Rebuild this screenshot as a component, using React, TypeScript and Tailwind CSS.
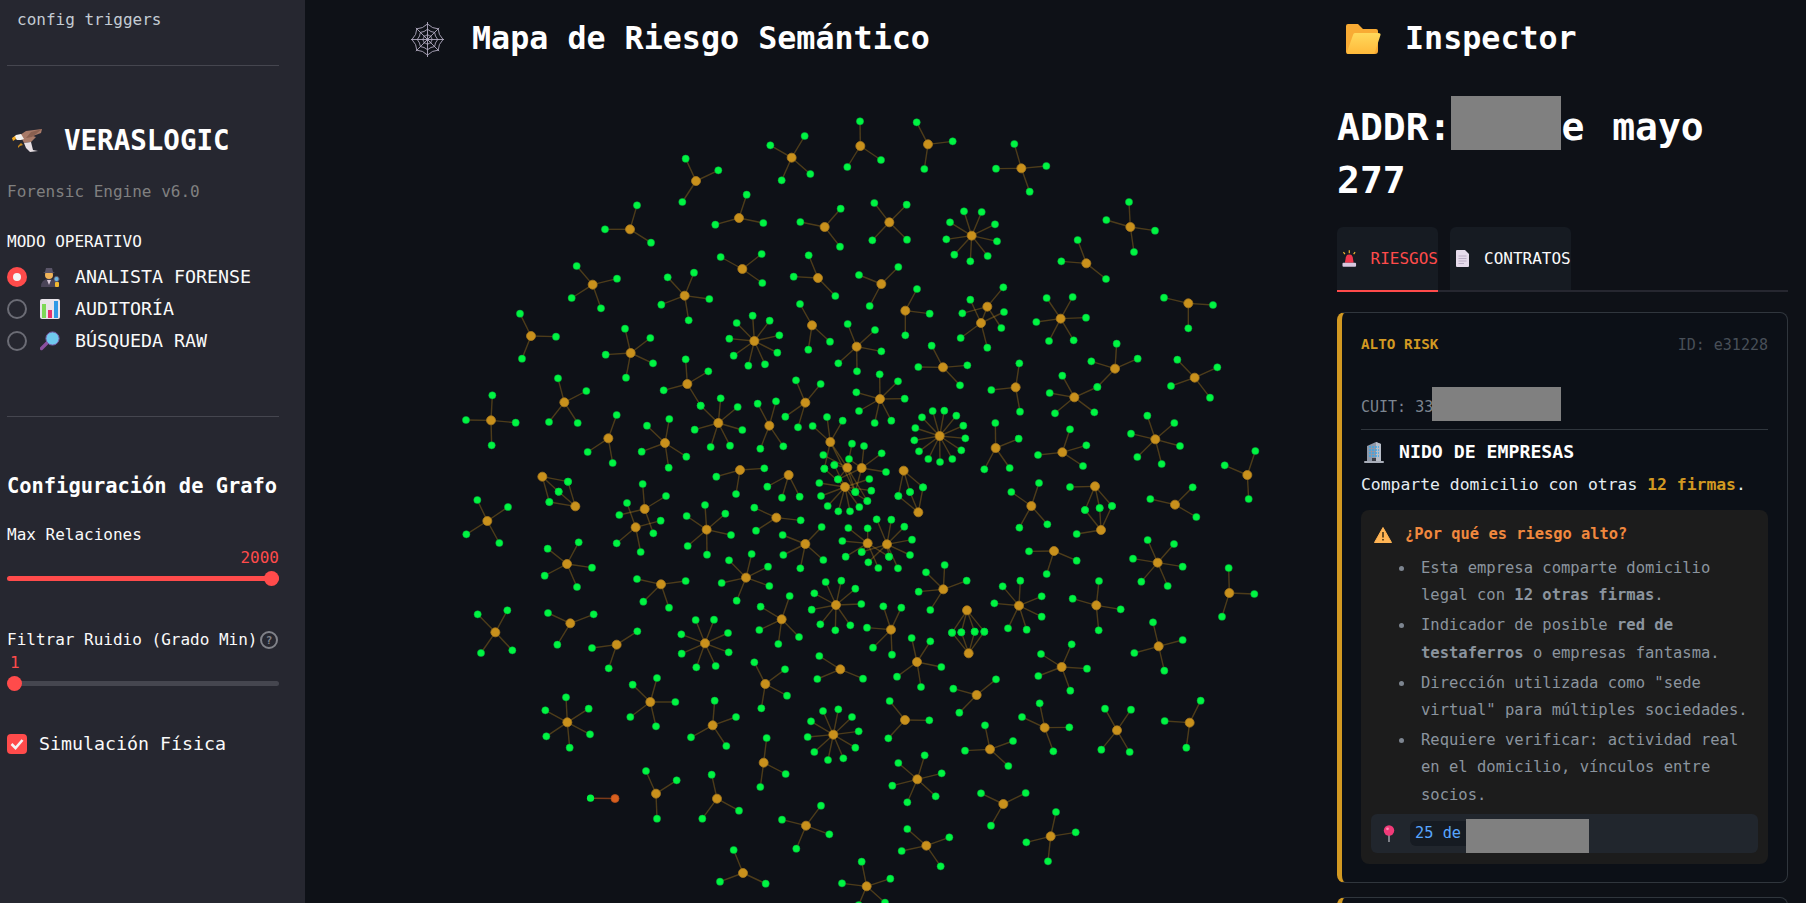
type Hub = number[]

// hub x, hub y, then leaf x/y pairs; numbers are 3x crops, so shift by origin and divide
const c7: Hub[] = [
  [391, 186, 338, 138, 381, 111, 428, 122, 373, 266, 442, 263, 466, 336],
  [442, 263, 370, 225, 456, 191, 403, 255, 414, 298, 502, 363, 466, 336],
  [485, 264, 447, 237, 492, 198, 545, 220, 558, 276, 414, 298, 466, 336],
  [435, 321, 358, 309, 363, 348, 383, 378, 415, 394, 450, 394, 478, 381, 502, 363, 514, 332, 508, 297, 403, 255, 373, 266],
  [611, 272, 595, 348, 630, 336, 669, 322],
  [655, 397, 595, 348, 630, 336, 669, 322],
  [503, 490, 445, 444, 503, 445, 427, 483, 437, 530, 485, 516, 535, 564, 567, 530],
  [561, 493, 530, 418, 574, 419, 613, 440, 636, 479, 630, 525, 594, 565, 505, 547, 567, 530, 485, 516],
]
const c8: Hub[] = [
  [1025, 173, 961, 136, 1064, 108, 1081, 222, 995, 241],
  [1231, 138, 1230, 64, 1192, 201, 1293, 180],
  [738, 243, 707, 176, 805, 211, 697, 306],
  [540, 388, 561, 316, 465, 388, 603, 428],
  [867, 354, 890, 284, 796, 374, 940, 369],
  [1124, 381, 1172, 326, 1051, 366, 1170, 440],
  [428, 554, 380, 498, 501, 536, 365, 594, 453, 625],
  [877, 507, 812, 471, 935, 462, 937, 549],
  [1104, 534, 1076, 466, 1031, 530, 1156, 588],
  [704, 587, 653, 532, 732, 518, 778, 597, 634, 614, 716, 661],
  [243, 708, 210, 641, 318, 710, 216, 776],
  [913, 723, 860, 669, 908, 647, 959, 662, 988, 706, 982, 758, 945, 793, 895, 797, 851, 767, 838, 716],
  [1086, 676, 1050, 612, 1140, 725, 1075, 749],
  [1220, 740, 1193, 672, 1165, 790, 1221, 814, 1275, 690, 1294, 754],
  [542, 759, 525, 686, 601, 714, 609, 790, 528, 833, 467, 764],
  [712, 852, 707, 778, 775, 814, 641, 871, 752, 917],
  [343, 907, 324, 835, 409, 873, 383, 969, 297, 966],
  [123, 961, 127, 886, 197, 968, 125, 1036, 48, 960],
  [805, 969, 812, 895, 863, 921, 877, 990, 840, 1037, 782, 1041, 734, 989, 752, 917],
  [958, 977, 923, 911, 978, 904, 1000, 1039, 931, 1046],
  [1066, 908, 1038, 841, 1112, 852, 1044, 982, 1006, 950],
  [645, 1029, 591, 977, 658, 957, 709, 1070, 656, 1103, 575, 1055],
  [475, 1015, 500, 945, 413, 1056, 488, 1089],
  [870, 1110, 943, 1105, 799, 1130, 858, 1182],
  [1016, 1125, 952, 1160, 996, 1193, 1049, 1190],
  [277, 1130, 354, 1145, 326, 1175, 298, 1206],
  [376, 1219, 354, 1145, 326, 1175, 298, 1206],
]
const c9: Hub[] = [
  [204, 133, 170, 67, 278, 124, 193, 207],
  [484, 205, 463, 132, 559, 198, 509, 275, 408, 206],
  [88, 367, 43, 309, 140, 314, 141, 419, 37, 421],
  [335, 407, 312, 334, 365, 336, 405, 373, 411, 424, 383, 468, 331, 484, 283, 464, 259, 418, 270, 367],
  [811, 381, 807, 306, 885, 392, 822, 456, 739, 360],
  [679, 490, 653, 420, 604, 484, 738, 537],
  [64, 552, 115, 501, -3, 525, 29, 618],
  [136, 632, 171, 567, 209, 641, 136, 706],
  [382, 620, 430, 562, 307, 640, 424, 684, 363, 669],
  [363, 669, 331, 599, 432, 636, 302, 714, 382, 743],
  [602, 656, 560, 594, 638, 591, 678, 653, 641, 721, 567, 723, 529, 666],
  [985, 610, 912, 593, 1059, 615, 985, 685],
  [249, 802, 215, 737, 322, 796, 300, 856, 175, 801],
  [765, 806, 770, 731, 833, 776, 694, 784, 712, 861],
  [467, 862, 478, 790, 394, 870, 480, 935],
  [643, 892, 607, 827, 712, 861, 703, 937, 585, 940, 569, 879],
  [1004, 833, 952, 779, 1072, 802, 1050, 893, 933, 858],
  [886, 1018, 862, 947, 943, 969, 960, 1038, 905, 1092, 832, 1071, 813, 1001],
  [607, 1057, 630, 988, 679, 1036, 669, 1098, 534, 1065],
  [1162, 1125, 1186, 1053, 1094, 1096, 1166, 1197],
  [60, 897, 59, 823, 114, 844, 134, 896, 94, 962, 44, 969, -3, 933, -11, 877],
  [239, 1008, 218, 933, 253, 932, 289, 947, 310, 977, 316, 1015, 304, 1051, 277, 1077, 240, 1086, 205, 1077, 177, 1054, 163, 1021, 166, 984, 186, 952],
  [407, 1044, 406, 969, 476, 1016, 449, 1104, 373, 1108],
]
const c10: Hub[] = [
  [112, 63, 82, 0, 174, 21, 49, 103, 148, 129],
  [584, 27, 578, -48, 648, -12, 508, 45, 610, 100],
  [557, 82, 531, 9, 632, 62, 500, 130, 572, 156],
  [770, 89, 765, 15, 826, 41, 843, 105, 771, 164, 713, 138, 710, 48],
  [979, 53, 913, 23, 1052, 61, 918, 92],
  [1066, 132, 998, 105, 1115, 81, 1120, 180, 1051, 205, 1000, 165],
  [888, 233, 837, 181, 905, 162, 954, 200, 958, 258, 860, 302, 815, 249],
  [1158, 315, 1127, 246, 1174, 242, 1216, 266, 1234, 312, 1201, 376, 1156, 391, 1111, 373, 1085, 329, 1093, 280],
  [995, 358, 932, 320, 1019, 288, 1047, 411, 985, 432, 928, 390],
  [351, 192, 293, 146, 386, 127, 426, 203, 381, 261, 284, 227],
  [633, 253, 561, 237, 707, 243, 657, 323, 580, 305],
  [136, 397, 83, 343, 172, 331, 187, 451, 93, 459],
  [361, 370, 294, 339, 431, 343, 322, 434],
  [500, 434, 562, 394, 426, 444, 476, 505],
  [765, 430, 737, 360, 792, 359, 834, 399, 836, 457, 797, 498, 739, 502, 695, 461, 694, 403],
  [946, 552, 913, 487, 1005, 508, 1011, 587, 934, 625],
  [1171, 508, 1108, 468, 1239, 536, 1102, 537],
  [601, 606, 548, 554, 621, 534, 676, 606, 618, 679, 541, 651],
  [788, 676, 794, 602, 858, 651, 829, 738, 723, 712],
  [352, 667, 348, 592, 416, 626, 420, 703, 359, 743, 289, 709, 286, 631],
  [1150, 704, 1119, 633, 1165, 628, 1206, 651, 1226, 694, 1216, 743, 1180, 775, 1134, 780, 1093, 756, 1073, 711, 1083, 664],
  [941, 788, 950, 714, 1007, 822, 931, 861],
  [618, 881, 588, 813, 680, 841, 621, 956],
  [801, 896, 785, 824, 867, 932, 757, 956],
  [1068, 977, 1113, 917, 1138, 1003, 1039, 1046, 996, 959],
  [879, 1119, 851, 1050, 947, 1151, 810, 1145],
]
const c11: Hub[] = [
  [514, 18, 454, -24, 537, -51, 478, 83, 562, 73],
  [945, 14, 871, -3, 998, -38, 1009, 51],
  [705, -41, 630, -39, 675, 30, 719, 24, 756, 18],
  [723, 90, 675, 30, 719, 24, 756, 18, 650, 102],
  [582, 153, 507, 154, 650, 182, 560, 222],
  [893, 188, 863, 120, 942, 132, 968, 200, 923, 258, 844, 245, 819, 176],
  [1108, 279, 1106, 204, 1183, 282, 1086, 350],
  [709, 316, 717, 243, 782, 328, 716, 391, 638, 296],
  [250, 268, 198, 217, 254, 195, 320, 242, 211, 330, 176, 275],
  [477, 317, 428, 259, 481, 242, 545, 289, 545, 350, 500, 389, 444, 385, 403, 310],
  [93, 389, 70, 319, 124, 323, 96, 464, 39, 443, 21, 383],
  [321, 331, 276, 398, 304, 397, 344, 395, 373, 395],
  [326, 460, 276, 398, 304, 397, 344, 395, 373, 395],
  [171, 486, 155, 414, 211, 424, 244, 501, 183, 561, 111, 530],
  [605, 501, 543, 462, 635, 433, 681, 506, 631, 572, 535, 528],
  [896, 439, 879, 367, 968, 420, 913, 512, 823, 459],
  [350, 585, 280, 566, 408, 538, 298, 638],
  [135, 660, 89, 603, 208, 661, 85, 715],
  [554, 683, 539, 610, 486, 651, 628, 682, 580, 754],
  [771, 691, 735, 626, 813, 629, 809, 756, 724, 749],
  [989, 668, 1022, 602, 914, 663, 979, 743],
  [390, 748, 375, 676, 459, 723, 445, 798, 315, 752],
  [172, 838, 115, 789, 194, 766, 245, 820, 227, 889, 142, 907, 97, 857],
  [430, 912, 363, 880, 497, 879, 393, 977],
  [572, 1009, 588, 936, 647, 997, 564, 1084, 499, 1027],
  [199, 1037, 142, 987, 268, 1012, 242, 1099, 125, 1053],
  [20, 1159, 5, 1085, 91, 1136, 75, 1208, -54, 1150, -4, 1215],
]

const place = (ox: number, oy: number, hubs: Hub[]) =>
  hubs.map((h) => h.map((v, i) => (i % 2 === 0 ? ox + v / 3 : oy + v / 3)))

const hubs = [
  ...place(700, 380, c7),
  ...place(450, 100, c8),
  ...place(860, 100, c9),
  ...place(450, 500, c10),
  ...place(860, 500, c11),
]
const orphan = { x: 615, y: 798.5, lx: 590.5, ly: 798.2 }

const Graph = () => (
  <svg className="block w-[1005px] h-[827px]" viewBox="305 76 1005 827">
    {hubs.map((h, i) => {
      const lines = []
      for (let j = 2; j < h.length; j += 2) {
        lines.push(<line key={j} x1={h[0]} y1={h[1]} x2={h[j]} y2={h[j + 1]} stroke="#d29922" strokeOpacity="0.32" strokeWidth="1.4" />)
      }
      return <g key={i}>{lines}</g>
    })}
    <line x1={orphan.x} y1={orphan.y} x2={orphan.lx} y2={orphan.ly} stroke="#e8641c" strokeOpacity="0.5" strokeWidth="1.4" />
    {hubs.map((h, i) => {
      const leaves = []
      for (let j = 2; j < h.length; j += 2) {
        leaves.push(<circle key={j} cx={h[j]} cy={h[j + 1]} r="3.6" fill="#00f542" stroke="#00b03c" strokeWidth="0.5" />)
      }
      return <g key={i}>{leaves}</g>
    })}
    {hubs.map((h, i) => (
      <circle key={i} cx={h[0]} cy={h[1]} r="4.5" fill="#c9911c" stroke="#a87a1e" strokeWidth="0.8" />
    ))}
    <circle cx={orphan.x} cy={orphan.y} r="4" fill="#d9601f" stroke="#b44f1c" strokeWidth="0.8" />
    <circle cx={orphan.lx} cy={orphan.ly} r="3.6" fill="#00f542" />
  </svg>
)

const WebIcon = () => (
  <svg className="w-[35px] h-[37px]" viewBox="-18 -19 36 38" fill="none" stroke="#b5afc4" strokeWidth="0.9">
    <path d="M0-18V18M-17 0H17M-12-12 12 12M12-12-12 12" />
    <path d="M0-16Q5-11 11-11Q11-5 16 0Q11 5 11 11Q5 11 0 16Q-5 11-11 11Q-11 5-16 0Q-11-5-11-11Q-5-11 0-16Z" />
    <path d="M0-10.5Q3.5-7.5 7.3-7.3Q7.5-3.5 10.5 0Q7.5 3.5 7.3 7.3Q3.5 7.5 0 10.5Q-3.5 7.5-7.3 7.3Q-7.5 3.5-10.5 0Q-7.5-3.5-7.3-7.3Q-3.5-7.5 0-10.5Z" />
    <path d="M0-5Q2-3.5 3.5-3.5Q3.5-2 5 0Q3.5 2 3.5 3.5Q2 3.5 0 5Q-2 3.5-3.5 3.5Q-3.5 2-5 0Q-3.5-2-3.5-3.5Q-2-3.5 0-5Z" />
  </svg>
)

const Eagle = () => (
  <svg className="w-[32px] h-[24px]" viewBox="0 0 32 24">
    <path d="M30 0 14 2 8 6 12 14 19 13 24 8 21 7 29 4Z" fill="#a87a68" />
    <path d="M12 14 19 13 21 21 26 22 18 23 14 19Z" fill="#e8e0e4" />
    <path d="M9 5 4 6 0 10 3 9 5 11 9 11 12 10Z" fill="#f2f0ee" />
    <path d="M0 9 3 7 4 10 1 12Z" fill="#f2a71b" />
    <path d="M9 14 6 17 6 19 8 17 11 16Z" fill="#c98a1d" />
    <path d="M30 0 19 3 14 9 20 8 24 5Z" fill="#8a6050" />
  </svg>
)

const Detective = () => (
  <svg className="w-[20px] h-[21px]" viewBox="0 0 20 21">
    <path d="M1 20Q1 12 9 12Q17 12 17 20Z" fill="#4a4458" />
    <path d="M7 13 9 18 11 13Z" fill="#d8c8d8" />
    <circle cx="9" cy="8" r="4" fill="#f0b45a" />
    <path d="M3 6H15L13 5 12 1H6L5 5Z" fill="#5a5568" />
    <circle cx="16.5" cy="12" r="2.6" fill="#6cb6e0" stroke="#5a5568" />
    <rect x="15" y="15" width="4" height="5" rx="1" fill="#f2b830" />
  </svg>
)

const BarChart = () => (
  <svg className="w-[20px] h-[20px]" viewBox="0 0 20 20">
    <rect width="20" height="20" rx="2" fill="#e8e4ea" />
    <rect x="2" y="5" width="4" height="14" fill="#7ed957" />
    <rect x="8" y="11" width="4" height="8" fill="#e8326e" />
    <rect x="14" y="2" width="4" height="17" fill="#2f9ae6" />
  </svg>
)

const Magnifier = () => (
  <svg className="w-[20px] h-[20px]" viewBox="0 0 20 20">
    <path d="M7 12 1.5 17.5" stroke="#8a4f9e" strokeWidth="3.4" strokeLinecap="round" />
    <circle cx="12.5" cy="7.5" r="6.6" fill="#6fc8ee" stroke="#7a5ca8" strokeWidth="1" />
  </svg>
)

const Folder = () => (
  <svg className="w-[36px] h-[32px]" viewBox="0 0 36 32">
    <defs>
      <linearGradient id="folderFront" x1="0" y1="0" x2="0" y2="1">
        <stop offset="0" stopColor="#ffd95c" />
        <stop offset="1" stopColor="#ffb93a" />
      </linearGradient>
    </defs>
    <path d="M1 3Q1 1 3 1H13L18 6H31Q33 6 33 8V28Q33 31 30 31H3Q1 31 1 29Z" fill="#f8ab34" />
    <path d="M8 12Q8.5 10 10 10H33Q36 10 35.5 12L30 29Q29.5 31 28 31H4Q1.5 31 2 29Z" fill="url(#folderFront)" />
  </svg>
)

const Siren = () => (
  <svg className="w-[15px] h-[17px]" viewBox="0 0 15 17">
    <path d="M7.5 0V3M1.5 2 3 4M13.5 2 12 4" stroke="#f2b830" strokeWidth="1.2" />
    <path d="M3 13 4 7Q4.5 4.5 7.5 4.5Q10.5 4.5 11 7L12 13Z" fill="#f0364c" />
    <rect x="0.5" y="13" width="14" height="4" rx="1" fill="#d8c8e0" />
  </svg>
)

const Doc = () => (
  <svg className="w-[13px] h-[17px]" viewBox="0 0 13 17">
    <path d="M0 1Q0 0 1 0H9L13 4V16Q13 17 12 17H1Q0 17 0 16Z" fill="#e6dcec" />
    <path d="M2.5 6H10.5M2.5 8.5H10.5M2.5 11H10.5M2.5 13.5H8" stroke="#a99cb8" strokeWidth="0.7" />
  </svg>
)

const Building = () => (
  <svg className="w-[20px] h-[21px]" viewBox="0 0 20 21">
    <path d="M3 4 12 0 17 2V20H3Z" fill="#8f98a8" />
    <path d="M12 0 17 2V20H12Z" fill="#b8bec8" />
    <path d="M5 5H15M5 8H15M5 11H15M5 14H15" stroke="#3aa6e8" strokeWidth="1.7" strokeDasharray="2 1" />
    <rect x="8" y="16" width="4" height="4" fill="#3c3f48" />
    <rect x="0" y="19" width="20" height="2" rx="1" fill="#a8adb8" />
  </svg>
)

const Warning = () => (
  <svg className="w-[18px] h-[16px]" viewBox="0 0 18 16">
    <path d="M9 0.5 17.5 15.5H0.5Z" fill="#ffb454" stroke="#ffb454" strokeLinejoin="round" />
    <path d="M9 5V10.5M9 12V13.5" stroke="#3a2a10" strokeWidth="1.5" />
  </svg>
)

const Pin = () => (
  <svg className="w-[12px] h-[17px]" viewBox="0 0 12 17">
    <path d="M6 10V17" stroke="#a8a8b0" strokeWidth="1.4" />
    <circle cx="6" cy="5.5" r="5.2" fill="#f03a78" />
    <circle cx="4.5" cy="3.8" r="1.4" fill="#ff8ab0" />
  </svg>
)

const Redacted = ({ className }: { className: string }) => <span className={`block shrink-0 bg-[#808080] ${className}`} />

const ModeRow = ({ active, icon, label }: { active?: boolean; icon: React.ReactNode; label: string }) => (
  <div className="flex h-[32px] items-center">
    {active ? (
      <span className="flex h-[20px] w-[20px] items-center justify-center rounded-full bg-[#ff4b4b]">
        <span className="h-[8px] w-[8px] rounded-full bg-[#f4f4f4]" />
      </span>
    ) : (
      <span className="h-[20px] w-[20px] rounded-full border-2 border-[#6b6c75]" />
    )}
    <span className="ml-[13px] flex w-[20px] justify-center">{icon}</span>
    <span className="ml-[15px] text-[18.3px] text-[#fafafa]">{label}</span>
  </div>
)

const Sidebar = () => (
  <aside className="w-[305px] shrink-0 bg-[#262730] px-[7px] pt-[8px]">
    <div className="w-[272px]">
      <p className="ml-[10px] text-[16px] leading-[24px] text-[#c4ccd4]">config triggers</p>
      <div className="mt-[33px] h-px bg-[#45464f]" />
      <div className="mt-[55px] flex h-[40px] items-center">
        <span className="ml-[5px]"><Eagle /></span>
        <span className="ml-[20px] text-[27.5px] font-bold text-white">VERASLOGIC</span>
      </div>
      <p className="mt-[19px] text-[16px] leading-[24px] text-[#808080]">Forensic Engine v6.0</p>
      <p className="mt-[26px] text-[16px] leading-[24px] text-[#fafafa]">MODO OPERATIVO</p>
      <div className="mt-[7px]">
        <ModeRow active icon={<Detective />} label="ANALISTA FORENSE" />
        <ModeRow icon={<BarChart />} label="AUDITORÍA" />
        <ModeRow icon={<Magnifier />} label="BÚSQUEDA RAW" />
      </div>
      <div className="mt-[59px] h-px bg-[#45464f]" />
      <h3 className="mt-[55px] text-[20.4px] font-bold leading-[28px] text-white">Configuración de Grafo</h3>
      <p className="mt-[23px] text-[16px] leading-[24px] text-[#fafafa]">Max Relaciones</p>
      <p className="mt-px text-right text-[16px] leading-[20px] text-[#ff4b4b]">2000</p>
      <div className="relative mt-[3px] flex h-[15px] items-center">
        <div className="h-[5px] w-full rounded-full bg-[#ff4b4b]" />
        <span className="absolute right-0 h-[15px] w-[15px] rounded-full bg-[#ff4b4b]" />
      </div>
      <div className="mt-[42px] flex h-[24px] items-center justify-between">
        <span className="text-[16px] text-[#fafafa]">Filtrar Ruidio (Grado Min)</span>
        <span className="mr-px flex h-[18px] w-[18px] items-center justify-center rounded-full border-2 border-[#808289] text-[11px] font-bold leading-none text-[#808289]">?</span>
      </div>
      <p className="mt-px pl-[3px] text-[16px] leading-[20px] text-[#ff4b4b]">1</p>
      <div className="relative mt-[3px] flex h-[15px] items-center">
        <div className="h-[5px] w-full rounded-full bg-[#45464f]" />
        <span className="absolute left-0 h-[15px] w-[15px] rounded-full bg-[#ff4b4b]" />
      </div>
      <div className="mt-[43px] flex h-[20px] items-center">
        <span className="flex h-[20px] w-[20px] items-center justify-center rounded-[4px] bg-[#ff4b4b]">
          <svg className="h-[12px] w-[14px]" viewBox="0 0 14 12" fill="none" stroke="#f4f4f4" strokeWidth="2.6">
            <path d="M1.5 6 5.5 10 12.5 2" />
          </svg>
        </span>
        <span className="ml-[12px] text-[18.3px] text-[#fafafa]">Simulación Física</span>
      </div>
    </div>
  </aside>
)

const Risk = ({ children }: { children: React.ReactNode }) => (
  <li className="mb-[3px] flex">
    <span className="mr-[17px] mt-[11px] h-[5px] w-[5px] shrink-0 rounded-full bg-[#7d8590]" />
    <span>{children}</span>
  </li>
)

const Inspector = () => (
  <section className="w-[496px] shrink-0 pl-[27px] pr-[18px] pt-[15px]">
    <div className="flex h-[48px] items-center">
      <span className="ml-[8px]"><Folder /></span>
      <h2 className="ml-[24px] text-[31.7px] font-bold text-white">Inspector</h2>
    </div>
    <h1 className="mt-[38px] text-[38px] font-bold leading-[53px] text-white [word-spacing:5px]">
      ADDR:<span className="mb-[-10px] mt-[-10px] inline-block h-[54px] w-[110px] bg-[#808080] align-baseline" />e mayo<br />277
    </h1>
    <div className="mt-[20px] flex gap-[12px] border-b-2 border-[#262730]">
      <div className="mb-[-2px] flex h-[65px] w-[101px] items-center rounded-t-[6px] border-b-2 border-[#ff4b4b] bg-[#161b22] pl-[5px]">
        <Siren />
        <span className="ml-[14px] text-[16px] text-[#ff4b4b]">RIESGOS</span>
      </div>
      <div className="flex h-[63px] w-[121px] items-center rounded-t-[6px] bg-[#161b22] pl-[6px]">
        <Doc />
        <span className="ml-[15px] text-[16px] text-[#fafafa]">CONTRATOS</span>
      </div>
    </div>
    <article className="mt-[20px] h-[571px] rounded-[8px] border border-l-[5px] border-[#30363d] border-l-[#d29922] bg-[#0c1017] pl-[19px] pr-[19px] pt-[22px]">
      <div className="flex h-[20px] items-center justify-between">
        <span className="text-[14.3px] font-bold text-[#d29922]">ALTO RISK</span>
        <span className="text-[15px] text-[#484f58]">ID: e31228</span>
      </div>
      <div className="mt-[32px] flex h-[34px] items-center">
        <span className="pt-[6px] text-[15px] text-[#7d8590]">CUIT: 33</span>
        <Redacted className="ml-[-1px] h-[34px] w-[129px]" />
      </div>
      <div className="mt-[8px] h-px bg-[#30363d]" />
      <div className="mt-[10px] flex h-[24px] items-center">
        <span className="ml-[3px]"><Building /></span>
        <strong className="ml-[15px] text-[18.2px] font-bold text-white">NIDO DE EMPRESAS</strong>
      </div>
      <p className="mt-[9px] whitespace-nowrap text-[16.4px] leading-[24px] text-[#e6edf3]">
        Comparte domicilio con otras <b className="text-[#d29922]">12 firmas</b>.
      </p>
      <div className="mt-[13px] h-[354px] rounded-[8px] bg-[#1c1c1c] px-[10px] pt-[14px]">
        <div className="flex h-[22px] items-center">
          <span className="ml-[3px]"><Warning /></span>
          <span className="ml-[13px] text-[15.4px] font-bold text-[#f0883e]">¿Por qué es riesgo alto?</span>
        </div>
        <ul className="mt-[9px] h-[259px] pl-[28px] text-[15.5px] leading-[27.2px] text-[#8b949e]">
          <Risk>Esta empresa comparte domicilio legal con <b>12 otras firmas</b>.</Risk>
          <Risk>Indicador de posible <b>red de testaferros</b> o empresas fantasma.</Risk>
          <Risk>Dirección utilizada como "sede virtual" para múltiples sociedades.</Risk>
          <Risk>Requiere verificar: actividad real en el domicilio, vínculos entre socios.</Risk>
        </ul>
        <div className="flex h-[39px] items-center rounded-[6px] bg-[#21262d] pl-[12px]">
          <Pin />
          <span className="ml-[15px] flex h-[25px] items-center rounded-l-[6px] bg-[#161b22] pl-[5px] pr-[5px] text-[15.3px] text-[#58a6ff]">25 de</span>
          <Redacted className="h-[34px] w-[123px] self-end" />
        </div>
      </div>
    </article>
    <div className="mt-[14px] h-[60px] rounded-[8px] border border-l-[5px] border-[#30363d] border-l-[#d29922] bg-[#0c1017]" />
  </section>
)

export default function App() {
  return (
    <div className="flex h-[903px] w-[1806px] overflow-hidden bg-[#0e1117] font-['DejaVu_Sans_Mono','Liberation_Mono',monospace]">
      <Sidebar />
      <main className="w-[1005px] shrink-0">
        <div className="flex h-[76px] items-center pt-[2px] pl-[105px]">
          <WebIcon />
          <h2 className="ml-[27px] text-[31.7px] font-bold text-white">Mapa de Riesgo Semántico</h2>
        </div>
        <Graph />
      </main>
      <Inspector />
    </div>
  )
}
